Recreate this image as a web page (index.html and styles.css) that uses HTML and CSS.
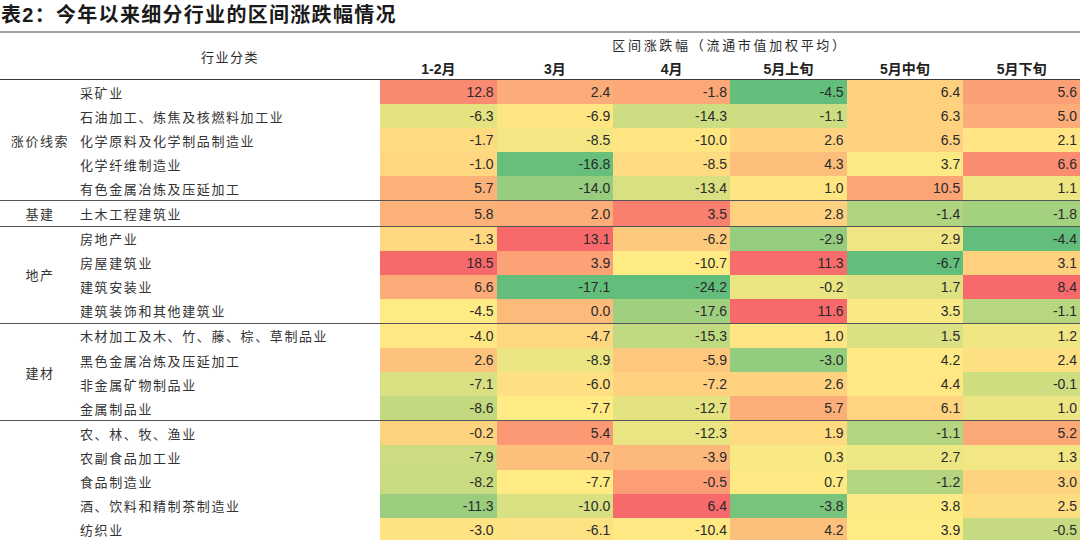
FILE: index.html
```html
<!DOCTYPE html>
<html lang="zh-CN">
<head>
<meta charset="utf-8">
<title>表2</title>
<link rel="stylesheet" href="styles.css">
</head>
<body>
<div class="page">
  <div class="title">表2：今年以来细分行业的区间涨跌幅情况</div>
  <table class="tbl">
    <colgroup>
      <col class="c-grp"><col class="c-name">
      <col><col><col><col><col><col>
    </colgroup>
    <thead>
      <tr class="hrow">
        <th rowspan="2" class="h-empty"></th>
        <th rowspan="2" class="h-cat">行业分类</th>
        <th colspan="6" class="h-range">区间涨跌幅（流通市值加权平均）</th>
      </tr>
      <tr class="hrow">
        <th class="h-per">1-2月</th>
        <th class="h-per">3月</th>
        <th class="h-per">4月</th>
        <th class="h-per">5月上旬</th>
        <th class="h-per">5月中旬</th>
        <th class="h-per">5月下旬</th>
      </tr>
    </thead>
    <tbody>
      <tr><td rowspan="5" class="grp">涨价线索</td><td class="name">采矿业</td><td class="v">12.8</td><td class="v">2.4</td><td class="v">-1.8</td><td class="v">-4.5</td><td class="v">6.4</td><td class="v">5.6</td></tr>
      <tr><td class="name">石油加工、炼焦及核燃料加工业</td><td class="v">-6.3</td><td class="v">-6.9</td><td class="v">-14.3</td><td class="v">-1.1</td><td class="v">6.3</td><td class="v">5.0</td></tr>
      <tr><td class="name">化学原料及化学制品制造业</td><td class="v">-1.7</td><td class="v">-8.5</td><td class="v">-10.0</td><td class="v">2.6</td><td class="v">6.5</td><td class="v">2.1</td></tr>
      <tr><td class="name">化学纤维制造业</td><td class="v">-1.0</td><td class="v">-16.8</td><td class="v">-8.5</td><td class="v">4.3</td><td class="v">3.7</td><td class="v">6.6</td></tr>
      <tr class="end"><td class="name">有色金属冶炼及压延加工</td><td class="v">5.7</td><td class="v">-14.0</td><td class="v">-13.4</td><td class="v">1.0</td><td class="v">10.5</td><td class="v">1.1</td></tr>

      <tr class="end"><td class="grp">基建</td><td class="name">土木工程建筑业</td><td class="v">5.8</td><td class="v">2.0</td><td class="v">3.5</td><td class="v">2.8</td><td class="v">-1.4</td><td class="v">-1.8</td></tr>

      <tr><td rowspan="4" class="grp">地产</td><td class="name">房地产业</td><td class="v">-1.3</td><td class="v">13.1</td><td class="v">-6.2</td><td class="v">-2.9</td><td class="v">2.9</td><td class="v">-4.4</td></tr>
      <tr><td class="name">房屋建筑业</td><td class="v">18.5</td><td class="v">3.9</td><td class="v">-10.7</td><td class="v">11.3</td><td class="v">-6.7</td><td class="v">3.1</td></tr>
      <tr><td class="name">建筑安装业</td><td class="v">6.6</td><td class="v">-17.1</td><td class="v">-24.2</td><td class="v">-0.2</td><td class="v">1.7</td><td class="v">8.4</td></tr>
      <tr class="end"><td class="name">建筑装饰和其他建筑业</td><td class="v">-4.5</td><td class="v">0.0</td><td class="v">-17.6</td><td class="v">11.6</td><td class="v">3.5</td><td class="v">-1.1</td></tr>

      <tr><td rowspan="4" class="grp">建材</td><td class="name">木材加工及木、竹、藤、棕、草制品业</td><td class="v">-4.0</td><td class="v">-4.7</td><td class="v">-15.3</td><td class="v">1.0</td><td class="v">1.5</td><td class="v">1.2</td></tr>
      <tr><td class="name">黑色金属冶炼及压延加工</td><td class="v">2.6</td><td class="v">-8.9</td><td class="v">-5.9</td><td class="v">-3.0</td><td class="v">4.2</td><td class="v">2.4</td></tr>
      <tr><td class="name">非金属矿物制品业</td><td class="v">-7.1</td><td class="v">-6.0</td><td class="v">-7.2</td><td class="v">2.6</td><td class="v">4.4</td><td class="v">-0.1</td></tr>
      <tr class="end"><td class="name">金属制品业</td><td class="v">-8.6</td><td class="v">-7.7</td><td class="v">-12.7</td><td class="v">5.7</td><td class="v">6.1</td><td class="v">1.0</td></tr>

      <tr><td rowspan="5" class="grp"></td><td class="name">农、林、牧、渔业</td><td class="v">-0.2</td><td class="v">5.4</td><td class="v">-12.3</td><td class="v">1.9</td><td class="v">-1.1</td><td class="v">5.2</td></tr>
      <tr><td class="name">农副食品加工业</td><td class="v">-7.9</td><td class="v">-0.7</td><td class="v">-3.9</td><td class="v">0.3</td><td class="v">2.7</td><td class="v">1.3</td></tr>
      <tr><td class="name">食品制造业</td><td class="v">-8.2</td><td class="v">-7.7</td><td class="v">-0.5</td><td class="v">0.7</td><td class="v">-1.2</td><td class="v">3.0</td></tr>
      <tr><td class="name">酒、饮料和精制茶制造业</td><td class="v">-11.3</td><td class="v">-10.0</td><td class="v">6.4</td><td class="v">-3.8</td><td class="v">3.8</td><td class="v">2.5</td></tr>
      <tr><td class="name">纺织业</td><td class="v">-3.0</td><td class="v">-6.1</td><td class="v">-10.4</td><td class="v">4.2</td><td class="v">3.9</td><td class="v">-0.5</td></tr>
    </tbody>
  </table>
</div>
<script src="script.js"></script>
</body>
</html>
```

FILE: styles.css
```css
html, body {
  margin: 0;
  padding: 0;
  background: #ffffff;
}

body {
  font-family: "Liberation Sans", "Noto Sans CJK SC", sans-serif;
  color: #222222;
}

.page {
  width: 1080px;
  overflow: hidden;
}

.title {
  height: 31px;
  line-height: 30px;
  border-bottom: 2px solid #a3a3a3;
  font-size: 20px;
  font-weight: 700;
  letter-spacing: 1.3px;
  padding-left: 1px;
  white-space: nowrap;
  color: #1a1a1a;
}

.tbl {
  width: 1080px;
  border-collapse: collapse;
  table-layout: fixed;
}

.c-grp { width: 80px; }
.c-name { width: 300px; }

.tbl thead {
  border-bottom: 1px solid #3a3a3a;
}

.hrow th {
  height: 23px;
  padding: 0;
  font-weight: 400;
  white-space: nowrap;
}

.h-cat {
  font-family: "Noto Sans CJK SC", sans-serif;
  font-size: 13px;
  letter-spacing: 1.5px;
  text-align: center;
  color: #2a2a2a;
}

.h-range {
  font-family: "Noto Sans CJK SC", sans-serif;
  font-size: 13px;
  font-weight: 500;
  letter-spacing: 2.7px;
  text-align: center;
  color: #2a2a2a;
}

.hrow .h-per {
  font-family: "Liberation Sans", "Noto Sans CJK SC", sans-serif;
  font-size: 14px;
  font-weight: 700;
  text-align: center;
  color: #222222;
}

.tbl td {
  height: 24.1px;
  padding: 0;
  white-space: nowrap;
}

.tbl tr.end {
  border-bottom: 1px solid #555555;
}

.tbl td.grp {
  font-family: "Noto Sans CJK SC", sans-serif;
  font-size: 13px;
  letter-spacing: 1.6px;
  text-align: center;
  color: #333333;
  border-bottom: 1px solid #555555;
}

.tbl td.name {
  font-family: "Noto Sans CJK SC", sans-serif;
  font-size: 13px;
  letter-spacing: 1.6px;
  text-align: left;
  color: #333333;
}

.tbl td.v {
  font-family: "Liberation Sans", sans-serif;
  font-size: 14px;
  text-align: right;
  padding-right: 3px;
  color: #2a2a2a;
  background: #ffeb84;
}
```

FILE: script.js
```js
(function () {
  var green = [99, 190, 123];
  var yellow = [255, 235, 132];
  var red = [248, 105, 107];
  var scales = [
    { min: -15, mid: -4.5, max: 18.5 },
    { min: -17.1, mid: -7.7, max: 13.1 },
    { min: -22, mid: -10.7, max: 6.4 },
    { min: -4.5, mid: 0.5, max: 11.6 },
    { min: -6.7, mid: 4.0, max: 16 },
    { min: -4.4, mid: 1.8, max: 8.4 }
  ];
  function mix(a, b, t) {
    t = Math.max(0, Math.min(1, t));
    return [0, 1, 2].map(function (i) { return Math.round(a[i] + (b[i] - a[i]) * t); });
  }
  var rows = document.querySelectorAll('.tbl tbody tr');
  rows.forEach(function (row) {
    var cells = row.querySelectorAll('td.v');
    cells.forEach(function (cell, i) {
      var v = parseFloat(cell.textContent);
      var s = scales[i];
      var c;
      if (v >= s.mid) {
        c = mix(yellow, red, (v - s.mid) / (s.max - s.mid));
      } else {
        c = mix(yellow, green, (s.mid - v) / (s.mid - s.min));
      }
      cell.style.backgroundColor = 'rgb(' + c.join(',') + ')';
    });
  });
})();
```
